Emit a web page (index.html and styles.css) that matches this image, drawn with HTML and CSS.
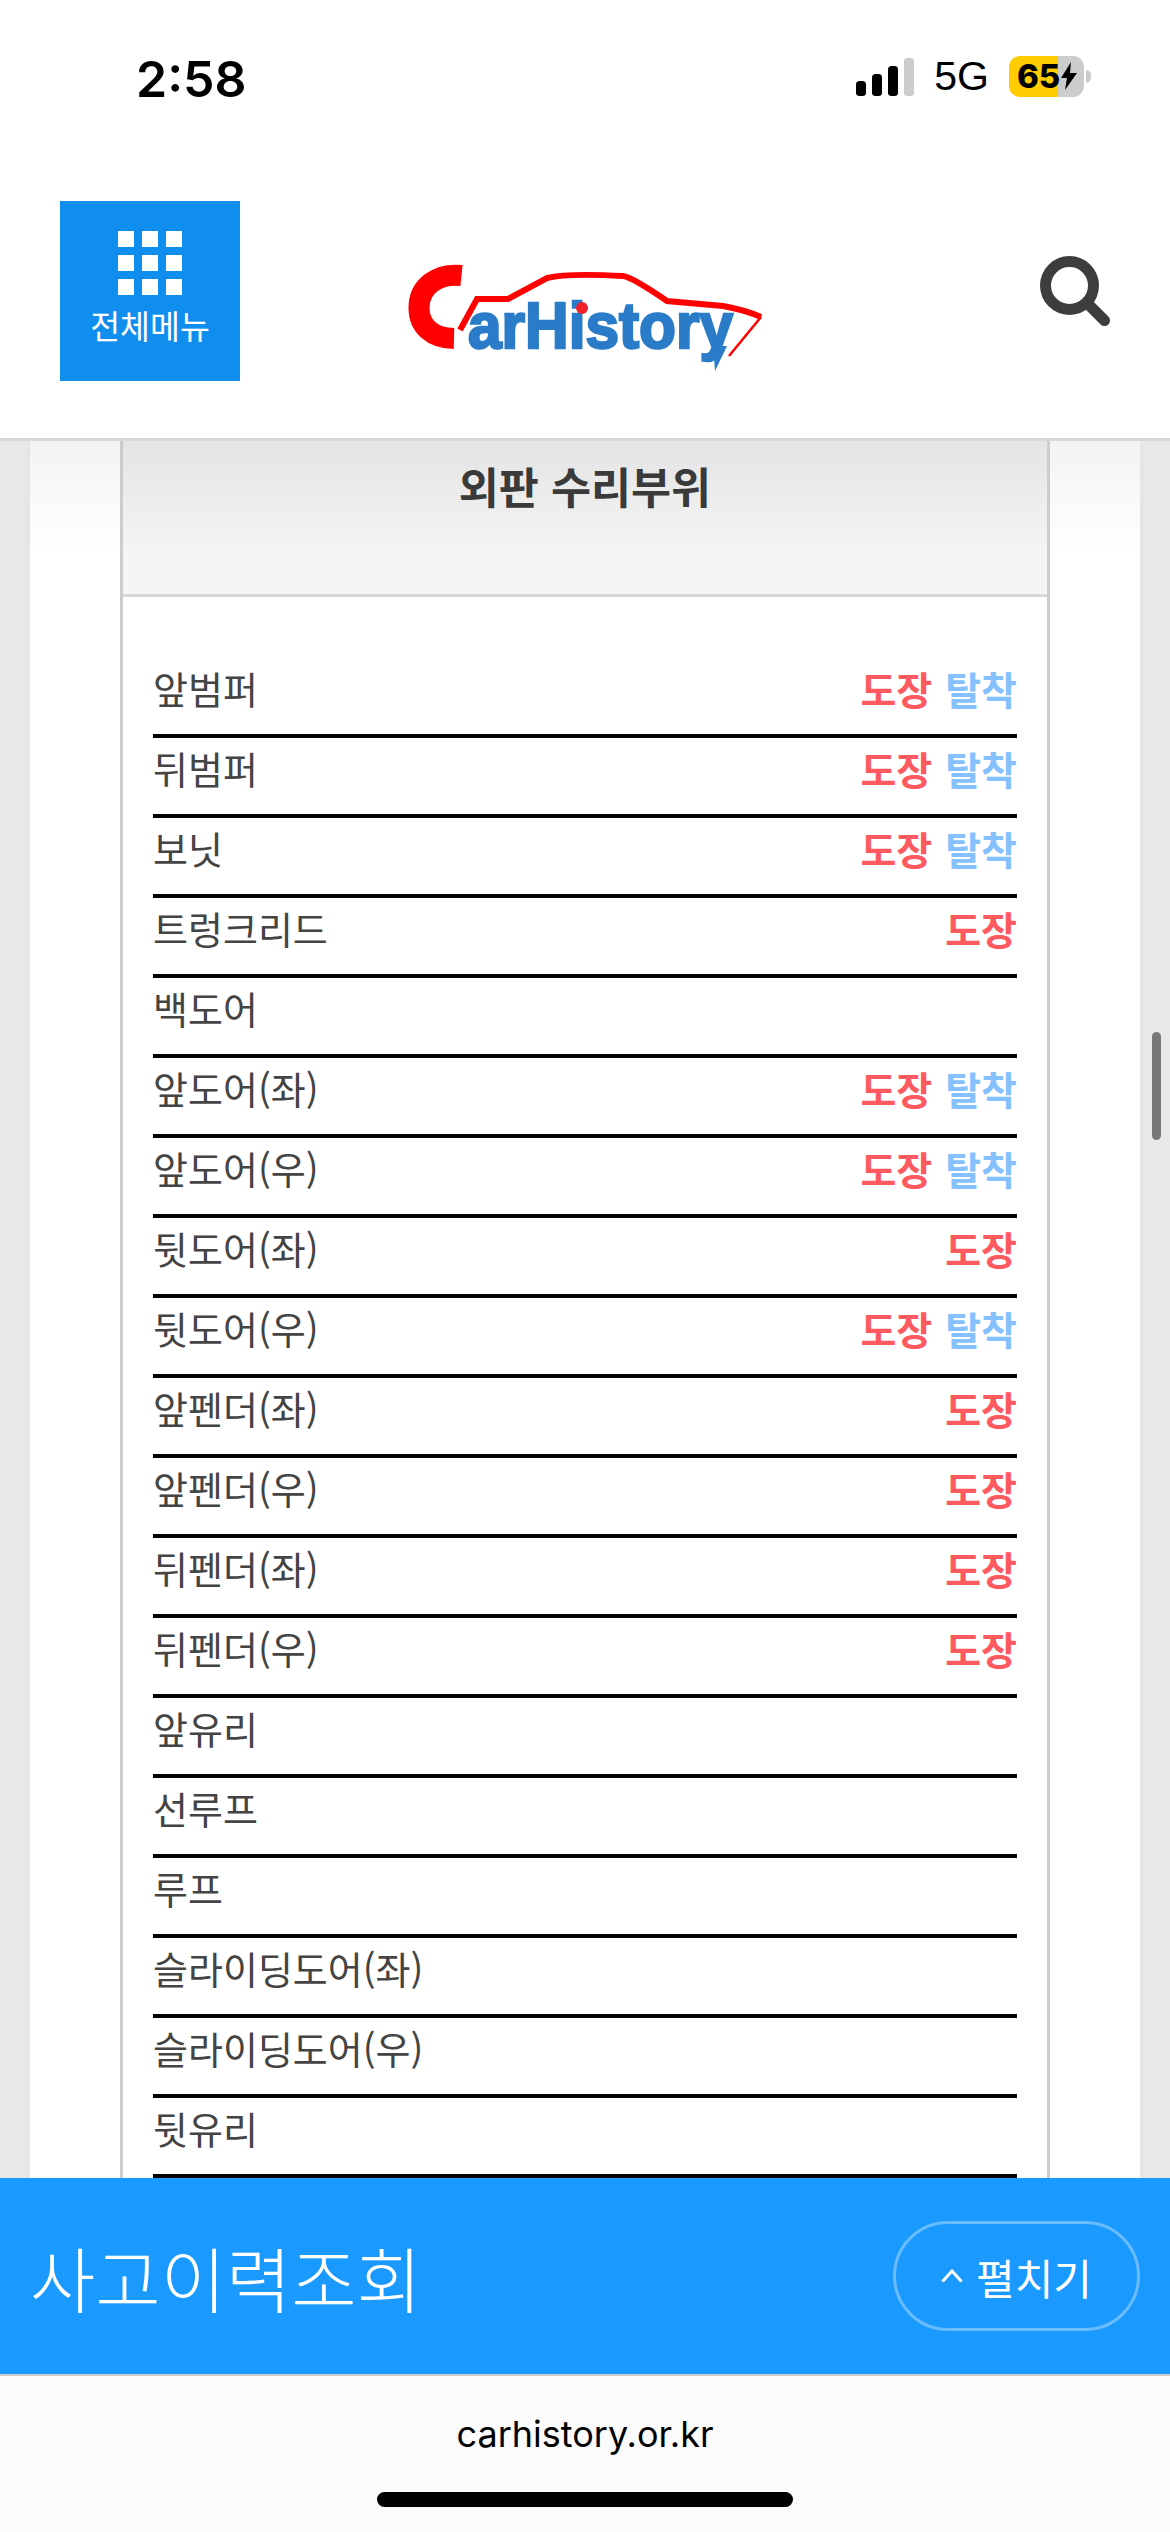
FILE: index.html
```html
<!DOCTYPE html>
<html lang="ko">
<head>
    <meta charset="UTF-8">
    <meta name="viewport" content="width=device-width, initial-scale=1.0">
    <title>사고이력조회</title>
    <link rel="stylesheet" href="styles.css">
</head>
<body>
    <div class="screen">
        <div class="top">
            <div class="status">
                <span class="time">2:58</span>
                <div class="status-icons">
                    <svg class="signal" width="58" height="38" viewBox="0 0 58 38">
                        <rect x="0" y="23" width="10" height="15" rx="3.5" fill="#000"/>
                        <rect x="16" y="16" width="10" height="22" rx="3.5" fill="#000"/>
                        <rect x="32" y="8" width="10" height="30" rx="3.5" fill="#000"/>
                        <rect x="48" y="0" width="10" height="38" rx="3.5" fill="#ccc"/>
                    </svg>
                    <span class="network">5G</span>
                    <div class="battery">
                        <span>65</span>
                        <svg width="18" height="28" viewBox="0 0 18 28"><path d="M11 0 1 16h6L5 28 17 11h-7z" fill="#000"/></svg>
                    </div>
                </div>
            </div>
            <header class="header">
                <a class="menu-btn">
                    <span class="dots">
                        <i></i><i></i><i></i><i></i><i></i><i></i><i></i><i></i><i></i>
                    </span>
                    <span class="menu-label">전체메뉴</span>
                </a>
                <svg class="logo" width="410" height="198" viewBox="0 -48 410 198">
                    <path d="M81.500 35.500C58 33 39 46 39 68C39 86 52 98 74 98.500" fill="none" stroke="#f00" stroke-width="21"/>
                    <path d="M80 90 97 59H128L167 38Q187 33 243 36Q252 37 287 61L343 66Q365 70 381 77" fill="none" stroke="#f00" stroke-width="6"/>
                    <path d="M381 77 349 116" fill="none" stroke="#f00" stroke-width="2.500"/>
                    <text class="logo-text" x="88" y="108" textLength="265" lengthAdjust="spacingAndGlyphs">arHistory</text>
                    <path d="M333 106H347L335 131z" fill="#2a7bc8"/>
                    <circle cx="202" cy="68" r="6" fill="#f0202a"/>
                </svg>
                <svg class="search" width="74" height="74" viewBox="0 0 74 74">
                    <circle cx="33.500" cy="31.500" r="24" fill="none" stroke="#3d3d3d" stroke-width="11"/>
                    <path d="M51 49 68.500 66.500" stroke="#3d3d3d" stroke-width="11" stroke-linecap="round"/>
                </svg>
            </header>
        </div>

        <main class="content">
            <div class="panel">
                <section class="repair-box">
                    <h2 class="repair-title">외판 수리부위</h2>
                    <ul class="repair-list">
                        <li><span>앞범퍼</span><div class="tags"><b class="paint">도장</b><b class="detach">탈착</b></div></li>
                        <li><span>뒤범퍼</span><div class="tags"><b class="paint">도장</b><b class="detach">탈착</b></div></li>
                        <li><span>보닛</span><div class="tags"><b class="paint">도장</b><b class="detach">탈착</b></div></li>
                        <li><span>트렁크리드</span><div class="tags"><b class="paint">도장</b></div></li>
                        <li><span>백도어</span></li>
                        <li><span>앞도어(좌)</span><div class="tags"><b class="paint">도장</b><b class="detach">탈착</b></div></li>
                        <li><span>앞도어(우)</span><div class="tags"><b class="paint">도장</b><b class="detach">탈착</b></div></li>
                        <li><span>뒷도어(좌)</span><div class="tags"><b class="paint">도장</b></div></li>
                        <li><span>뒷도어(우)</span><div class="tags"><b class="paint">도장</b><b class="detach">탈착</b></div></li>
                        <li><span>앞펜더(좌)</span><div class="tags"><b class="paint">도장</b></div></li>
                        <li><span>앞펜더(우)</span><div class="tags"><b class="paint">도장</b></div></li>
                        <li><span>뒤펜더(좌)</span><div class="tags"><b class="paint">도장</b></div></li>
                        <li><span>뒤펜더(우)</span><div class="tags"><b class="paint">도장</b></div></li>
                        <li><span>앞유리</span></li>
                        <li><span>선루프</span></li>
                        <li><span>루프</span></li>
                        <li><span>슬라이딩도어(좌)</span></li>
                        <li><span>슬라이딩도어(우)</span></li>
                        <li><span>뒷유리</span></li>
                    </ul>
                </section>
            </div>
            <div class="scroll-thumb"></div>
        </main>

        <div class="bottom-bar">
            <span class="bottom-title">사고이력조회</span>
            <a class="expand-btn">
                <svg width="22" height="14" viewBox="0 0 22 14"><path d="M1.500 12.500 11 2l9.500 10.500" fill="none" stroke="#fff" stroke-width="3"/></svg>
                <span>펼치기</span>
            </a>
        </div>

        <footer class="browser-bar">
            <span class="url">carhistory.or.kr</span>
            <div class="home-bar"></div>
        </footer>
    </div>
</body>
</html>
```

FILE: styles.css
```css
html, body {
    margin: 0;
    padding: 0;
}

body {
    font-family: "Noto Sans CJK KR", "Noto Sans", sans-serif;
    background-color: #fff;
}

.screen {
    width: 1170px;
    height: 2532px;
    display: flex;
    flex-direction: column;
    overflow: hidden;
}

/* Status bar + site header */
.top {
    height: 438px;
    flex-shrink: 0;
    background-color: #fff;
    border-bottom: 3px solid #d8d8d8;
}

.status {
    height: 160px;
    box-sizing: border-box;
    padding: 54px 86px 0 136px;
    display: flex;
    justify-content: space-between;
    align-items: flex-start;
}

.time {
    font-family: Inter, sans-serif;
    font-size: 50px;
    font-weight: 600;
    line-height: 50px;
    color: #000;
}

.status-icons {
    display: flex;
    align-items: center;
    height: 44px;
    gap: 20px;
}

.signal {
    margin-top: 1px;
}

.network {
    font-family: "Liberation Sans", sans-serif;
    font-size: 41px;
    line-height: 44px;
    color: #000;
}

.battery {
    position: relative;
    width: 75px;
    height: 41px;
    box-sizing: border-box;
    padding-left: 8px;
    display: flex;
    align-items: center;
    border-radius: 11px;
    background: linear-gradient(90deg, #fc0 65%, #ccc 65%);
}

.battery span {
    font-family: Inter, sans-serif;
    font-size: 33px;
    font-weight: 800;
    line-height: 41px;
    color: #000;
}

.battery::after {
    content: "";
    position: absolute;
    right: -7px;
    top: 14px;
    width: 5px;
    height: 13px;
    border-radius: 0 6px 6px 0;
    background-color: #ccc;
}

.header {
    display: grid;
    grid-template-columns: 1fr auto 1fr;
    align-items: center;
    padding: 32px 60px 0;
}

.menu-btn {
    width: 180px;
    height: 180px;
    box-sizing: border-box;
    padding-top: 30px;
    display: flex;
    flex-direction: column;
    align-items: center;
    background-color: #108eed;
}

.dots {
    display: grid;
    grid-template-columns: repeat(3, 16px);
    grid-auto-rows: 16px;
    gap: 8px;
}

.dots i {
    background-color: #fff;
}

.menu-label {
    margin-top: 7px;
    font-size: 32.500px;
    line-height: 46px;
    color: #fff;
}

.logo-text {
    font-family: "Liberation Sans", sans-serif;
    font-size: 64px;
    font-weight: 700;
    fill: #2a7bc8;
    stroke: #2a7bc8;
    stroke-width: 2.500px;
}

.search {
    justify-self: end;
}

/* Scrolled page content */
.content {
    flex: 1;
    min-height: 0;
    position: relative;
    overflow: hidden;
    padding: 0 30px;
    background-color: #e8e8e8;
}

.panel {
    height: 100%;
    padding: 0 90px;
    background: linear-gradient(#f3f3f3, #fff 110px);
    box-shadow: 0 0 10px rgba(0, 0, 0, 0.04);
}

.repair-box {
    border-left: 3px solid #ccc;
    border-right: 3px solid #ccc;
    background-color: #fff;
}

.repair-title {
    height: 156px;
    margin: 0;
    padding-top: 15px;
    box-sizing: border-box;
    border-bottom: 3px solid #d8d8d8;
    background: linear-gradient(#e4e4e4, #f5f5f5 75%);
    font-size: 43.500px;
    line-height: 60px;
    font-weight: 700;
    text-align: center;
    color: #3a3a3a;
}

.repair-list {
    list-style: none;
    margin: 0;
    padding: 61px 30px 0;
}

.repair-list li {
    height: 80px;
    box-sizing: border-box;
    padding-bottom: 17px;
    display: flex;
    justify-content: space-between;
    align-items: center;
    border-bottom: 4px solid #000;
    font-size: 38px;
    color: #444;
}

.tags {
    display: flex;
    gap: 13px;
    font-size: 39px;
}

.paint {
    color: #ff5a5f;
}

.detach {
    color: #85c1ff;
}

.scroll-thumb {
    position: absolute;
    left: 1152px;
    top: 591px;
    width: 9px;
    height: 108px;
    border-radius: 5px;
    background-color: #777;
}

/* Fixed bar */
.bottom-bar {
    height: 198px;
    flex-shrink: 0;
    box-sizing: border-box;
    padding: 0 30px 0 30px;
    display: flex;
    justify-content: space-between;
    align-items: center;
    background-color: #1a9aff;
    border-bottom: 2px solid #ccc;
    color: #fff;
}

.bottom-title {
    font-size: 71px;
    font-weight: 300;
}

.expand-btn {
    width: 247px;
    height: 110px;
    box-sizing: border-box;
    display: flex;
    justify-content: center;
    align-items: center;
    gap: 13px;
    border: 3px solid rgba(255, 255, 255, 0.35);
    border-radius: 55px;
    font-size: 42px;
}

/* Safari address bar */
.browser-bar {
    height: 156px;
    flex-shrink: 0;
    box-sizing: border-box;
    padding-top: 38px;
    display: flex;
    flex-direction: column;
    align-items: center;
    background-color: #fbfbfb;
}

.url {
    font-family: Inter, sans-serif;
    font-size: 36px;
    line-height: 40px;
    color: #000;
}

.home-bar {
    width: 416px;
    height: 15px;
    margin-top: 38px;
    border-radius: 8px;
    background-color: #000;
}
```
